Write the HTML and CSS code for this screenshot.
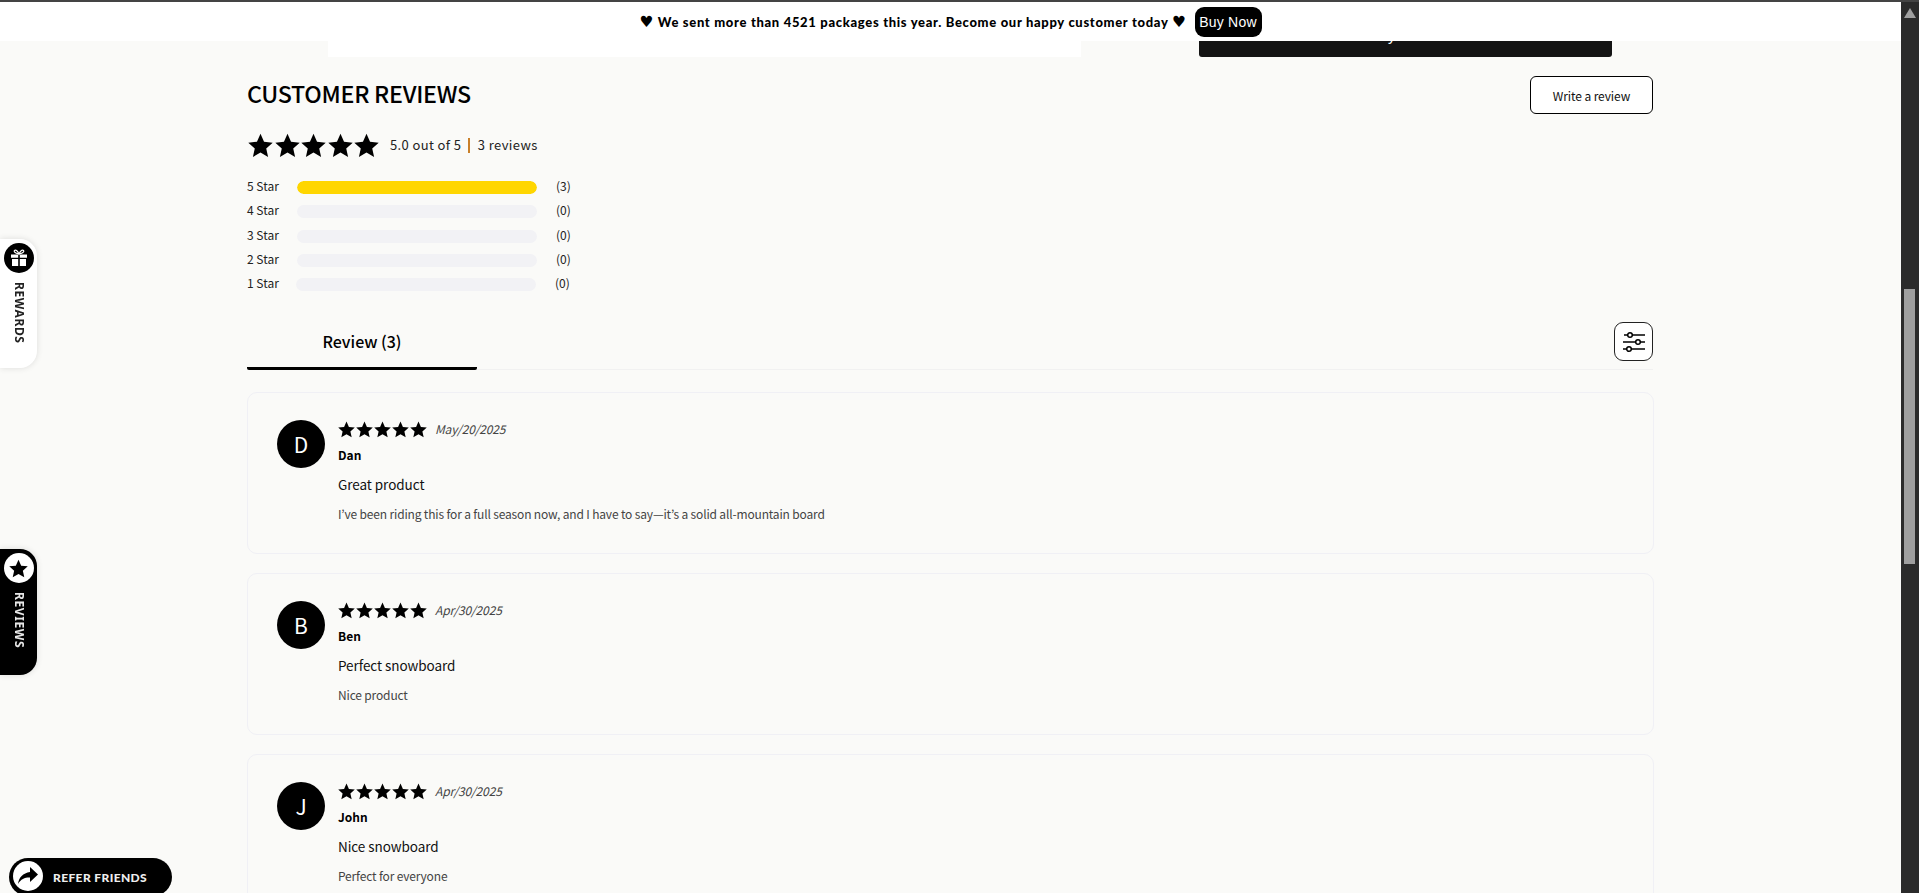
FILE: index.html
```html
<!DOCTYPE html>
<html lang="en">
<head>
<meta charset="utf-8">
<title>Customer Reviews</title>
<link rel="stylesheet" href="styles.css">
</head>
<body>
<svg class="defs" width="0" height="0" aria-hidden="true">
  <symbol id="star" viewBox="0 0 24 24"><path d="M12 .8l3.4 7.6 8.3.9-6.2 5.5 1.8 8.2L12 18.8 4.700 23l1.800-8.200L.3 9.300l8.300-.9z"/></symbol>
</svg>
<div class="topline"></div>
<div class="announce">
  <span class="announce-text"><span class="heart">♥</span> We sent more than 4521 packages this year. Become our happy customer today <span class="heart">♥</span></span>
  <a class="buy-now">Buy Now</a>
</div>
<div class="app">
  <main class="page">
    <div class="hero-stub">
      <div class="stub-white"></div>
      <div class="stub-black">Buy it now</div>
    </div>
    <section class="reviews">
      <header class="reviews-head">
        <h2 class="reviews-title">CUSTOMER REVIEWS</h2>
        <a class="write-btn">Write a review</a>
      </header>
      <div class="summary">
        <div class="stars-lg">
          <svg><use href="#star"/></svg><svg><use href="#star"/></svg><svg><use href="#star"/></svg><svg><use href="#star"/></svg><svg><use href="#star"/></svg>
        </div>
        <span class="summary-text">5.0 out of 5</span>
        <span class="summary-sep"></span>
        <span class="summary-text">3 reviews</span>
      </div>
      <div class="bars">
        <div class="bar-row"><span class="bar-label">5 Star</span><span class="bar-track"><span class="bar-fill" style="width:100%"></span></span><span class="bar-count">(3)</span></div>
        <div class="bar-row"><span class="bar-label">4 Star</span><span class="bar-track"></span><span class="bar-count">(0)</span></div>
        <div class="bar-row"><span class="bar-label">3 Star</span><span class="bar-track"></span><span class="bar-count">(0)</span></div>
        <div class="bar-row"><span class="bar-label">2 Star</span><span class="bar-track"></span><span class="bar-count">(0)</span></div>
        <div class="bar-row"><span class="bar-label">1 Star</span><span class="bar-track"></span><span class="bar-count">(0)</span></div>
      </div>
      <div class="tabs">
        <div class="tab-active">Review (3)</div>
        <button class="filter-btn" aria-label="Filter">
          <svg width="24" height="22" viewBox="0 0 24 22" fill="none" stroke="#000" stroke-width="1.500">
            <path d="M2 4h4M10 4h13M1 11h13M18 11h5M1 18h4M9 18h14"/>
            <circle cx="8" cy="4" r="2.300"/><circle cx="16" cy="11" r="2.300"/><circle cx="7" cy="18" r="2.300"/>
          </svg>
        </button>
      </div>
      <div class="cards">
        <article class="card">
          <div class="avatar">D</div>
          <div class="card-body">
            <div class="card-meta">
              <span class="stars-sm"><svg><use href="#star"/></svg><svg><use href="#star"/></svg><svg><use href="#star"/></svg><svg><use href="#star"/></svg><svg><use href="#star"/></svg></span>
              <span class="card-date">May/20/2025</span>
            </div>
            <div class="card-name">Dan</div>
            <div class="card-title">Great product</div>
            <p class="card-text">I’ve been riding this for a full season now, and I have to say—it’s a solid all-mountain board</p>
          </div>
        </article>
        <article class="card">
          <div class="avatar">B</div>
          <div class="card-body">
            <div class="card-meta">
              <span class="stars-sm"><svg><use href="#star"/></svg><svg><use href="#star"/></svg><svg><use href="#star"/></svg><svg><use href="#star"/></svg><svg><use href="#star"/></svg></span>
              <span class="card-date">Apr/30/2025</span>
            </div>
            <div class="card-name">Ben</div>
            <div class="card-title">Perfect snowboard</div>
            <p class="card-text">Nice product</p>
          </div>
        </article>
        <article class="card">
          <div class="avatar">J</div>
          <div class="card-body">
            <div class="card-meta">
              <span class="stars-sm"><svg><use href="#star"/></svg><svg><use href="#star"/></svg><svg><use href="#star"/></svg><svg><use href="#star"/></svg><svg><use href="#star"/></svg></span>
              <span class="card-date">Apr/30/2025</span>
            </div>
            <div class="card-name">John</div>
            <div class="card-title">Nice snowboard</div>
            <p class="card-text">Perfect for everyone</p>
          </div>
        </article>
      </div>
    </section>
  </main>
  <aside class="scrollbar">
    <span class="scroll-arrow"></span>
    <span class="scroll-thumb"></span>
  </aside>
</div>

<div class="side-tab side-rewards">
  <span class="side-icon">
    <svg width="20" height="20" viewBox="0 0 20 20" fill="#fff"><path d="M2 6.500h7.200v3.300H2zM10.800 6.500H18v3.300h-7.200zM3 11h6.200v7H3zM10.800 11H17v7h-6.200z"/><path d="M10 6C8.500 3 7 1.800 5.800 2.300 4.500 3 5.300 5.300 10 6zM10 6c1.500-3 3-4.200 4.200-3.700C15.500 3 14.700 5.300 10 6z" fill="none" stroke="#fff" stroke-width="1.200"/></svg>
  </span>
  <span class="side-label">REWARDS</span>
</div>
<div class="side-tab side-reviews">
  <span class="side-icon">
    <svg width="19" height="19" viewBox="0 0 24 24" fill="#000"><use href="#star"/></svg>
  </span>
  <span class="side-label">REVIEWS</span>
</div>
<div class="refer">
  <span class="refer-icon">
    <svg width="22" height="20" viewBox="0 0 22 20" fill="#000"><path d="M13 1l8 7.500L13 16v-4.500C8 11.300 4 13 1 18c.8-6.500 5-11 12-12z"/></svg>
  </span>
  <span class="refer-label">REFER FRIENDS</span>
</div>
```

FILE: styles.css
```css
* { box-sizing: border-box; }
html, body { margin: 0; padding: 0; height: 100%; overflow: hidden; }
body {
  font-family: "Noto Sans CJK JP", "Noto Sans", sans-serif;
  color: #000;
  background: #fafaf8;
}
.defs { position: absolute; }
.topline { position: fixed; top: 0; left: 0; right: 0; height: 2px; background: #444; z-index: 30; }
.announce {
  position: fixed; top: 2px; left: 0; right: 18px; height: 39px;
  background: #fff; z-index: 20;
  display: flex; align-items: center; justify-content: center; gap: 8px;
}
.announce-text {
  font-family: "Lato", sans-serif; font-weight: 900; font-size: 13px;
  letter-spacing: .68px; color: #000; white-space: nowrap;
}
.heart { font-family: "DejaVu Sans", sans-serif; font-size: 15.500px; line-height: 13px; }
.buy-now {
  display: flex; align-items: center; justify-content: center;
  width: 67px; height: 30px; margin-top: 1px;
  background: #000; color: #fff; border-radius: 9px;
  font-family: "Liberation Sans", sans-serif; font-size: 14px; letter-spacing: .2px;
}
.app { display: flex; height: 893px; }
.page { flex: 1; min-width: 0; overflow: hidden; background: #fafaf8; }
.scrollbar { width: 18px; background: #2b2b2b; display: flex; flex-direction: column; padding: 8px 4px 0 3px; }
.scroll-arrow {
  display: block; width: 0; height: 0; margin-left: 0;
  border-left: 6px solid transparent; border-right: 6px solid transparent;
  border-bottom: 10px solid #a0a0a0;
}
.scroll-thumb { display: block; width: 11px; height: 275px; margin-top: 271px; background: #9f9f9f; }

.hero-stub { height: 57px; padding-left: 328px; display: flex; align-items: stretch; }
.stub-white { width: 753px; background: #fff; }
.stub-black {
  width: 413px; margin-left: 118px; background: #141414; color: #fff;
  border-radius: 0 0 3px 3px; display: flex; justify-content: center; align-items: flex-end;
  font-size: 15px; line-height: 22px; padding-bottom: 12px;
}

.reviews { width: 1406px; margin-left: 247px; }
.reviews-head { display: flex; justify-content: space-between; align-items: flex-start; margin-top: 19px; height: 38px; }
.reviews-title { margin: 0; font-size: 23.200px; font-weight: 500; line-height: 35px; letter-spacing: -.27px; }
.write-btn {
  width: 123px; height: 38px; display: flex; align-items: center; justify-content: center;
  background: #fff; border: 1px solid #000; border-radius: 6px; font-size: 12px; letter-spacing: -.1px; color: #111;
}
.summary { display: flex; align-items: center; height: 24px; margin-top: 19px; }
.stars-lg { display: flex; gap: 1.500px; width: 131px; margin-left: 1px; }
.stars-lg svg { width: 25px; height: 25px; flex: none; }
.summary-text { font-size: 13px; line-height: 20px; letter-spacing: .38px; color: #222; }
.stars-lg + .summary-text { margin-left: 11px; }
.summary-sep { width: 1.500px; height: 15px; background: #c9802a; margin: 0 8px 0 7px; }
.bars { margin-top: 24px; display: flex; flex-direction: column; gap: 11.250px; }
.bar-row { display: flex; align-items: center; height: 13px; font-size: 12px; line-height: 13px; color: #222; }
.bar-row:last-child .bar-label { width: 49px; }
.bar-label { width: 50px; flex: none; position: relative; top: -2px; }
.bar-track { display: block; width: 240px; height: 13px; flex: none; background: #f2f2f5; border-radius: 7px; overflow: hidden; }
.bar-fill { display: block; height: 100%; background: #ffd600; border-radius: 7px; }
.bar-count { margin-left: 19px; position: relative; top: -2px; }
.tabs { position: relative; display: flex; justify-content: space-between; height: 48px; margin-top: 31px; border-bottom: 1px solid #f1f1f1; }
.tab-active {
  width: 230px; height: 48px; text-align: center; font-size: 16px; font-weight: 500; line-height: 39px;
  border-bottom: 3px solid #000; border-radius: 0 0 2px 2px;
}
.filter-btn {
  width: 39px; height: 39px; padding: 0; display: flex; align-items: center; justify-content: center;
  background: #fff; border: 1px solid #222; border-radius: 9px;
}
.cards { margin-top: 22px; margin-right: -1px; display: flex; flex-direction: column; gap: 19px; }
.card {
  height: 162px; display: flex; gap: 13px; padding: 27px 29px 0;
  border: 1px solid #f0f0f5; border-radius: 10px;
}
.avatar {
  width: 48px; height: 48px; flex: none; border-radius: 50%;
  background: #000; color: #fff; display: flex; align-items: center; justify-content: center;
  font-size: 21px;
}
.card-body { min-width: 0; }
.card-meta { display: flex; align-items: center; height: 18px; }
.stars-sm { display: flex; gap: 1px; width: 97px; }
.stars-sm svg { width: 17px; height: 17px; flex: none; }
.card-date { font-size: 12px; font-style: italic; line-height: 18px; letter-spacing: -.15px; color: #444; }
.card-name { margin-top: 8px; font-size: 12px; font-weight: 700; line-height: 18px; }
.card-title { margin-top: 9.500px; font-size: 13.500px; letter-spacing: -.06px; line-height: 20px; color: #111; }
.card-text { margin: 10px 0 0; font-size: 12px; letter-spacing: -.16px; line-height: 20px; color: #444; }

.side-tab {
  position: fixed; left: 0; width: 37px; border-radius: 0 17px 17px 0;
  display: flex; flex-direction: column; align-items: center; padding: 4px 0 0 0;
  box-shadow: 0 0 6px rgba(0,0,0,.12); z-index: 10;
}
.side-rewards { top: 239px; height: 129px; background: #fff; color: #222; }
.side-reviews { top: 549px; height: 126px; background: #000; color: #e8e8e8; }
.side-icon {
  width: 30px; height: 30px; border-radius: 50%; display: flex; align-items: center; justify-content: center;
}
.side-rewards .side-icon { background: #000; }
.side-reviews .side-icon { background: #fff; }
.side-label {
  writing-mode: vertical-rl; margin-top: 9px;
  font-family: "Noto Sans", sans-serif; font-size: 12px; font-weight: 700; letter-spacing: .6px; line-height: 14px;
}
.refer {
  position: fixed; left: 9px; top: 858px; width: 163px; height: 38px; border-radius: 19px;
  background: #000; color: #eee; display: flex; align-items: center; gap: 10px; padding: 0 0 3px 4px; z-index: 10;
}
.refer-icon { width: 30px; height: 30px; flex: none; border-radius: 50%; background: #fff; display: flex; align-items: center; justify-content: center; }
.refer-label { font-family: "Lato", sans-serif; font-size: 12px; font-weight: 900; letter-spacing: .38px; white-space: nowrap; position: relative; top: 2px; }
```
